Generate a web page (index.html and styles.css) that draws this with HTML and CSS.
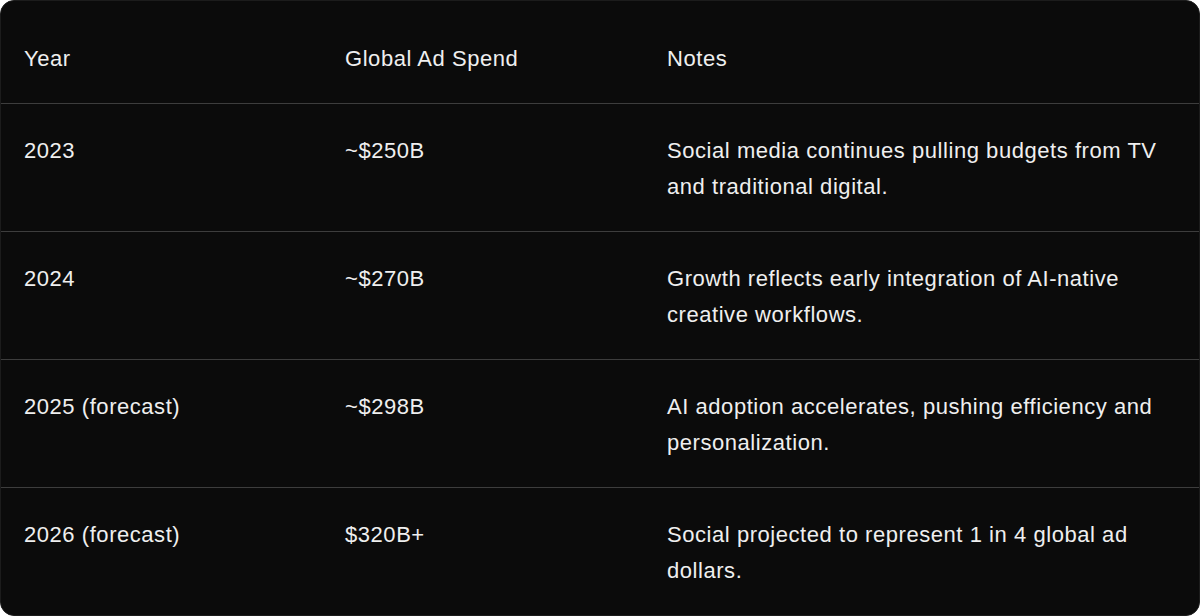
FILE: index.html
```html
<!DOCTYPE html>
<html>
<head>
<meta charset="utf-8">
<link rel="stylesheet" href="styles.css">
</head>
<body>
<div class="card">
  <table class="data">
    <colgroup>
      <col class="c1"><col class="c2"><col class="c3">
    </colgroup>
    <thead>
      <tr><th>Year</th><th>Global Ad Spend</th><th>Notes</th></tr>
    </thead>
    <tbody>
      <tr><td>2023</td><td>~$250B</td><td>Social media continues pulling budgets from TV and traditional digital.</td></tr>
      <tr><td>2024</td><td>~$270B</td><td>Growth reflects early integration of AI-native creative workflows.</td></tr>
      <tr><td>2025 (forecast)</td><td>~$298B</td><td>AI adoption accelerates, pushing efficiency and personalization.</td></tr>
      <tr><td>2026 (forecast)</td><td>$320B+</td><td>Social projected to represent 1 in 4 global ad dollars.</td></tr>
    </tbody>
  </table>
</div>
</body>
</html>
```
FILE: styles.css
```css
html, body {
  margin: 0;
  padding: 0;
  background: #ffffff;
}
body {
  width: 1200px;
  height: 616px;
  font-family: "Liberation Sans", Arial, sans-serif;
}
.card {
  box-sizing: border-box;
  width: 1200px;
  height: 616px;
  background: #0b0b0b;
  border: 1px solid #1c1c1c;
  border-radius: 14px;
  overflow: hidden;
}
.data {
  width: 100%;
  border-collapse: collapse;
  table-layout: fixed;
  color: #efefef;
  font-size: 22px;
  line-height: 36px;
  letter-spacing: 0.55px;
}
.c1 { width: 321px; }
.c2 { width: 322px; }
.data th {
  text-align: left;
  font-weight: 400;
  padding: 40px 24px 26px 23px;
  vertical-align: top;
  border-bottom: 1px solid #3d3d3d;
}
.data td {
  padding: 29px 24px 26px 23px;
  vertical-align: top;
  border-bottom: 1px solid #3d3d3d;
  height: 72px;
}
.data tbody tr:last-child td {
  border-bottom: none;
}
.data td:last-child { padding-right: 30px; }
```
